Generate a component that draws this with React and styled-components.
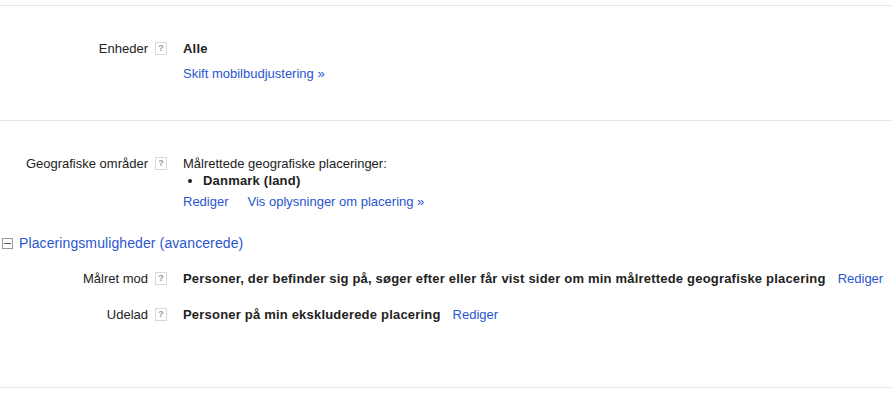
import React from "react"
import styled, { createGlobalStyle } from "styled-components"

const GlobalStyle = createGlobalStyle`
  body {
    margin: 0;
    background: #fff;
    font-family: Arial, "Liberation Sans", sans-serif;
    font-size: 13px;
    color: #222;
  }
`

const Page = styled.div`
  padding-top: 5px;
  width: 891px;
`

const Section = styled.section`
  border-top: 1px solid #e5e5e5;
  padding: 34px 0 ${({ bottom }) => bottom}px;
  &:last-child {
    border-bottom: 1px solid #e5e5e5;
  }
`

const Row = styled.div`
  display: grid;
  grid-template-columns: 148px 35px 1fr;
  line-height: 18px;
  margin-top: ${({ top }) => top || 0}px;
`

const Label = styled.div`
  text-align: right;
  white-space: nowrap;
`

const HelpCell = styled.div`
  padding-left: 7px;
  padding-top: 2px;
`

const Help = styled.span`
  display: flex;
  align-items: center;
  justify-content: center;
  box-sizing: border-box;
  width: 12px;
  height: 13px;
  border: 1px solid #d9d9d9;
  color: #999;
  font-size: 9px;
  line-height: 1;
  font-weight: bold;
`

const Value = styled.div`
  white-space: nowrap;
`

const Strong = styled.span`
  font-weight: bold;
  letter-spacing: 0.2px;
`

const Link = styled.a`
  color: #2a56d0;
  text-decoration: none;
  cursor: pointer;
  margin-left: ${({ gap }) => gap || 0}px;
`

const LinkLine = styled.div`
  margin-top: ${({ top }) => top}px;
`

const Bullets = styled.ul`
  margin: -1px 0 0;
  padding-left: 20px;
  font-weight: bold;
  letter-spacing: 0.2px;
`

const Toggle = styled.div`
  display: flex;
  align-items: center;
  margin-top: 23px;
  padding-left: 2px;
  line-height: 18px;
  font-size: 14px;
  letter-spacing: 0.1px;
  color: #2a56d0;
  cursor: pointer;
`

const MinusBox = styled.span`
  position: relative;
  box-sizing: border-box;
  width: 11px;
  height: 11px;
  border: 1px solid #999;
  margin-right: 6px;
  &::after {
    content: "";
    position: absolute;
    left: 1px;
    right: 1px;
    top: 4px;
    height: 1px;
    background: #555;
  }
`

const HelpIcon = () => (
  <HelpCell>
    <Help>?</Help>
  </HelpCell>
)

export default function App() {
  return (
    <>
      <GlobalStyle />
      <Page>
        <Section bottom={37}>
          <Row>
            <Label>Enheder</Label>
            <HelpIcon />
            <Value>
              <Strong>Alle</Strong>
              <LinkLine top={7}>
                <Link>Skift mobilbudjustering »</Link>
              </LinkLine>
            </Value>
          </Row>
        </Section>
        <Section bottom={63}>
          <Row>
            <Label>Geografiske områder</Label>
            <HelpIcon />
            <Value>
              Målrettede geografiske placeringer:
              <Bullets>
                <li>Danmark (land)</li>
              </Bullets>
              <LinkLine top={3}>
                <Link>Rediger</Link>
                <Link gap={19}>Vis oplysninger om placering »</Link>
              </LinkLine>
            </Value>
          </Row>
          <Toggle>
            <MinusBox />
            Placeringsmuligheder (avancerede)
          </Toggle>
          <Row top={18}>
            <Label>Målret mod</Label>
            <HelpIcon />
            <Value>
              <Strong>
                Personer, der befinder sig på, søger efter eller får vist sider om min målrettede geografiske placering
              </Strong>
              <Link gap={12}>Rediger</Link>
            </Value>
          </Row>
          <Row top={18}>
            <Label>Udelad</Label>
            <HelpIcon />
            <Value>
              <Strong>Personer på min ekskluderede placering</Strong>
              <Link gap={12}>Rediger</Link>
            </Value>
          </Row>
        </Section>
      </Page>
    </>
  )
}
